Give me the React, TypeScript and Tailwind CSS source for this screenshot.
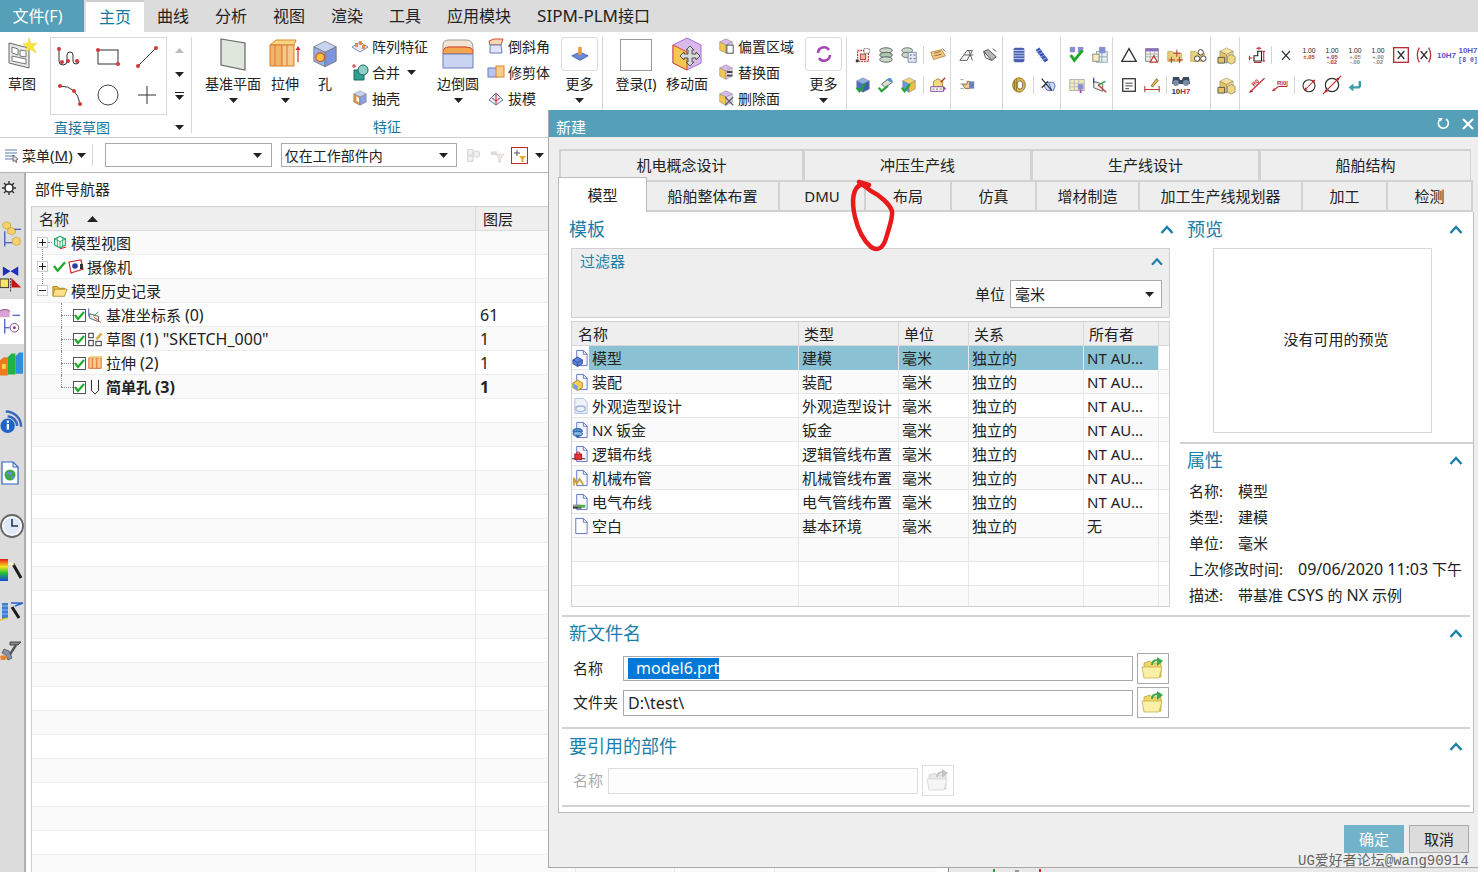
import React from "react";

const font = "font-['Noto_Sans','Noto_Sans_CJK_SC',sans-serif]";

// 下拉小三角
const Caret = ({ className = "" }: { className?: string }) => (
  <svg width="9" height="5" viewBox="0 0 9 5" className={className}>
    <path d="M0 0h9L4.5 5z" fill="#222" />
  </svg>
);

const Chevron = ({ className = "" }: { className?: string }) => (
  <svg width="14" height="9" viewBox="0 0 14 9" className={className}>
    <path d="M1.5 8 7 2l5.5 6" fill="none" stroke="#1a7ea8" strokeWidth="2.4" />
  </svg>
);

const Svg = ({ s = 18, children }: { s?: number; children: React.ReactNode }) => (
  <svg width={s} height={s} viewBox="0 0 20 20">
    {children}
  </svg>
);

const Cube = ({ top, left, right }: { top: string; left: string; right: string }) => (
  <>
    <path d="M10 2l7 3.5-7 3.5-7-3.5z" fill={top} stroke="#777" strokeWidth=".5" />
    <path d="M3 5.5 10 9v9l-7-3.5z" fill={left} stroke="#777" strokeWidth=".5" />
    <path d="M17 5.5 10 9v9l7-3.5z" fill={right} stroke="#777" strokeWidth=".5" />
  </>
);

const Folder = ({ tone = "#f6e27a" }: { tone?: string }) => (
  <path d="M2 6h5l2 2h8v9H2z" fill={tone} stroke="#b08f2a" strokeWidth=".7" />
);

const NumIcon = ({ a, b, red = true }: { a: string; b?: string; red?: boolean }) => (
  <svg width="20" height="20" viewBox="0 0 22 22">
    <text x="11" y="9" textAnchor="middle" fontSize="7.5" fontFamily="Liberation Sans" fill="#222">1.00</text>
    <text x="11" y="15.5" textAnchor="middle" fontSize="6.5" fontWeight="700" fontFamily="Liberation Sans" fill={red ? "#b5303a" : "#888"}>{a}</text>
    {b && <text x="11" y="21" textAnchor="middle" fontSize="6.5" fontWeight="700" fontFamily="Liberation Sans" fill={red ? "#b5303a" : "#888"}>{b}</text>}
  </svg>
);

// 工具栏上的小图标
const small: Record<string, React.ReactNode> = {
  sel: <Svg><rect x="4" y="5" width="12" height="12" fill="none" stroke="#c63a3a" strokeDasharray="2 1" strokeWidth="1.4" /><rect x="7" y="9" width="6" height="6" fill="#e9b7a0" stroke="#c02a2a" /><path d="M11 3h6v5h-6z" fill="#fff" stroke="#333" strokeDasharray="1 1" /><rect x="2" y="15" width="3" height="3" fill="#333" /></Svg>,
  stack: <Svg><ellipse cx="10" cy="5" rx="7" ry="3" fill="#c9d9c4" stroke="#556" /><ellipse cx="10" cy="10" rx="7" ry="3" fill="#a8c8a6" stroke="#556" /><ellipse cx="10" cy="15" rx="7" ry="3" fill="#c9d9c4" stroke="#556" /></Svg>,
  stack2: <Svg><ellipse cx="8" cy="5" rx="6" ry="3" fill="#c9d9c4" stroke="#667" /><ellipse cx="8" cy="10" rx="6" ry="3" fill="#c9d9c4" stroke="#667" /><rect x="9" y="7" width="9" height="11" fill="#e3e8f7" stroke="#7788aa" /><path d="M11 10h2M15 10h2M11 14h2M15 14h2" stroke="#556" /></Svg>,
  tag: <Svg><path d="M2 7l12-3 4 7-13 4z" fill="#f3c988" stroke="#b98a3e" /><path d="M6 8l7-2M6 11l8-2" stroke="#8a6a30" /><path d="M15 3l3 3" stroke="#555" /></Svg>,
  blueCheck: <Svg><Cube top="#8db0ea" left="#4a72c8" right="#3b5fb0" /><path d="M3 13l3 4 6-8" fill="none" stroke="#1fa52b" strokeWidth="2.4" /></Svg>,
  hammerCheck: <Svg><path d="M5 9l8-6 4 4-8 6z" fill="#d8e4c8" stroke="#556" /><path d="M10 4l5-2 3 4-3 1z" fill="#5b8fd8" /><path d="M2 13l3 4 7-6" fill="none" stroke="#1fa52b" strokeWidth="2.4" /></Svg>,
  yellowCheck: <Svg><Cube top="#f2d675" left="#6d95e0" right="#f0bc45" /><path d="M2 13l3 4 6-8" fill="none" stroke="#1fa52b" strokeWidth="2.4" /></Svg>,
  boxPen: <Svg><path d="M5 6l5-3 5 3v6H5z" fill="#f3d98a" stroke="#a8862e" /><rect x="2" y="12" width="14" height="5" fill="#fff" stroke="#7a3fa0" /><path d="M4 14.500h2M8 14.500h2M12 14.500h2" stroke="#555" /><path d="M16 11l3 3-3 3z" fill="#a447b8" /><path d="M13 7l5-5" stroke="#c0392b" strokeWidth="1.6" /></Svg>,
  wire: <Svg><path d="M2 16L10 5h6l-6 11z" fill="#f3f3f3" stroke="#555" /><path d="M7 10h10M12 5l4 11" stroke="#555" /></Svg>,
  wire2: <Svg><path d="M3 6l5-2 9 8-5 4z" fill="#b7b7b7" stroke="#444" /><path d="M3 6l2 7 7 3" fill="none" stroke="#444" /><path d="M13 3l4 3" stroke="#444" /></Svg>,
  hand: <Svg><path d="M3 4h3M3 9h3M3 14h3" stroke="#444" strokeDasharray="1 1" /><path d="M5 9h5V6h3v8H8l-2-3z" fill="#ecc9a0" stroke="#8a6a40" /><rect x="13" y="6" width="5" height="8" fill="#6a7fc0" /></Svg>,
  coil: <Svg><rect x="4" y="2" width="12" height="16" rx="2" fill="#4a5fb0" /><path d="M4 5h12M4 8h12M4 11h12M4 14h12" stroke="#cfd8f5" /></Svg>,
  spring: <Svg><path d="M5 3l10 14" stroke="#3d55b0" strokeWidth="5" /><path d="M3 7l6-3M5 10l6-3M7 13l6-3M9 16l6-3" stroke="#a5b6ee" /></Svg>,
  gold: <Svg><ellipse cx="10" cy="10" rx="7" ry="8" fill="#d9b44a" stroke="#8a7020" /><ellipse cx="11" cy="10" rx="3" ry="4.500" fill="#fff" stroke="#665" /><path d="M5 4v12M7 3v14" stroke="#8a7020" /></Svg>,
  crossed: <Svg><path d="M8 7h8l2 4-2 5H9l-3-4z" fill="#cfd9f3" stroke="#4f68c0" /><path d="M11 8l3 8" stroke="#4f68c0" /><path d="M3 3l11 13M3 13l7-7" stroke="#333" strokeWidth="1.4" /></Svg>,
  checkPurple: <Svg><rect x="2" y="1" width="6" height="6" fill="#8a8ed2" /><rect x="11" y="1" width="6" height="6" fill="#8a8ed2" /><path d="M3 10l4 6 9-11" fill="none" stroke="#1fa52b" strokeWidth="3.2" /></Svg>,
  tablePurple: <Svg><rect x="6" y="6" width="12" height="12" fill="#e8edf6" stroke="#8aa" /><path d="M6 12h12M12 6v12" stroke="#8aa" /><rect x="2" y="9" width="7" height="8" fill="#f6edc5" stroke="#887" /><rect x="9" y="1" width="7" height="7" fill="#8a8ed2" /></Svg>,
  gridYellow: <Svg><rect x="2" y="4" width="16" height="12" fill="#f2eebc" stroke="#aaa" /><path d="M2 8h16M2 12h16M7 4v12M12 4v12" stroke="#bbb" /><rect x="11" y="9" width="6" height="6" fill="#8a8ed2" /><path d="M14 15v4" stroke="#a447b8" strokeWidth="2" /></Svg>,
  csys: <Svg><path d="M3 6l10 3v8L3 13z" fill="#f0f0f0" stroke="#555" /><path d="M3 2v6" stroke="#2b3fc0" strokeWidth="1.4" /><path d="M8 10l8-4" stroke="#1fa52b" strokeWidth="1.4" /><path d="M8 10l9 8" stroke="#c0392b" strokeWidth="1.4" /></Svg>,
  triangle: <Svg><path d="M10 3l8 14H2z" fill="none" stroke="#333" strokeWidth="1.5" /></Svg>,
  tableTri: <Svg><rect x="3" y="3" width="14" height="14" fill="#f4f4f4" stroke="#777" /><rect x="3" y="3" width="14" height="3" fill="#8a6cc0" /><path d="M3 9h14M3 12h14M8 6v11M13 6v11" stroke="#aaa" /><path d="M12 11l4 7H8z" fill="#fff" stroke="#c0392b" strokeWidth="1.3" /></Svg>,
  folderCross: <Svg><Folder tone="#e9d27e" /><path d="M12 4v8M8 8h8M6 12v7M3 15.500h7M15 12v7M12 15.500h7" stroke="#c0282d" strokeWidth="1" /></Svg>,
  folderCircles: <Svg><Folder tone="#e9d27e" /><circle cx="13" cy="7" r="3" fill="#fff" stroke="#333" /><circle cx="9" cy="14" r="3" fill="#fff" stroke="#333" /><circle cx="16" cy="14" r="3" fill="#fff" stroke="#333" /></Svg>,
  note: <Svg><rect x="3" y="3" width="14" height="14" fill="#fff" stroke="#333" strokeWidth="1.4" /><path d="M6 8h8M6 11h8M6 14h4" stroke="#333" /></Svg>,
  brush: <Svg><path d="M2 11v7M18 11v7M2 15h16" stroke="#c0392b" strokeWidth="1.2" /><path d="M9 11l6-8 2 2-6 7z" fill="#e9b94e" stroke="#7a6a30" /></Svg>,
  binoc: <svg width="22" height="22" viewBox="0 0 22 22"><path d="M3 3h6l1 3h2l1-3h6l1 7H2z" fill="#3b4a60" /><circle cx="6" cy="9" r="3" fill="#7c8ba3" /><circle cx="16" cy="9" r="3" fill="#7c8ba3" /><text x="11" y="20" textAnchor="middle" fontSize="8" fontWeight="700" fontFamily="Liberation Sans" fill="#333">10<tspan fill="#b5303a">H7</tspan></text></svg>,
  lock: <Svg s={19}><Cube top="#f6e29a" left="#e8c35c" right="#f2d680" /><path d="M1 12h7v6H1z" fill="#e8c35c" stroke="#555" /><path d="M11 11l4-2 4 2v6l-4 2-4-2z" fill="#f2d680" stroke="#998" /></Svg>,
  stair: <svg width="18" height="18" viewBox="0 0 24 24"><path d="M8 20v-7h5V7h5v13z" fill="none" stroke="#222" strokeWidth="1.5" /><path d="M11 3h7M14.500 1v4M8 22h10M2 13v6M1 16h5M21 7v13M19 7h4M19 20h4" stroke="#c0282d" strokeWidth="1.4" /></svg>,
  x: <Svg s={16}><path d="M5 5l10 11M15 5L5 16" stroke="#333" strokeWidth="1.5" /></Svg>,
  xBox: <svg width="16" height="16" viewBox="0 0 24 24"><rect x="1" y="1" width="22" height="22" fill="#fff" stroke="#b5303a" strokeWidth="2" /><path d="M7 6l10 12M17 6L7 18" stroke="#333" strokeWidth="2" /></svg>,
  xParen: <svg width="16" height="16" viewBox="0 0 24 24"><path d="M5 1Q-1 12 5 23M19 1q6 11 0 22" fill="none" stroke="#b5303a" strokeWidth="2" /><path d="M7 6l10 12M17 6L7 18" stroke="#333" strokeWidth="2" /></svg>,
  h7: <svg width="23" height="22" viewBox="0 0 23 22"><text x="11.500" y="14" textAnchor="middle" fontSize="8" fontWeight="700" fontFamily="Liberation Sans" fill="#5a52c8">10H7</text></svg>,
  h7b: <svg width="20" height="24" viewBox="0 0 20 24" className="-translate-x-[2px]"><text x="10" y="10" textAnchor="middle" fontSize="8" fontWeight="700" fontFamily="Liberation Sans" fill="#5a52c8">10H7</text><text x="10" y="19" textAnchor="middle" fontSize="6.500" fontWeight="700" fontFamily="Liberation Mono" fill="#5a52c8">[8 0]</text></svg>,
  rDiag: <svg width="18" height="18" viewBox="0 0 24 24"><path d="M2 22L22 3" stroke="#c0282d" strokeWidth="1.4" /><path d="M2 22l5-1-3-3z" fill="#c0282d" /><text x="6" y="13" fontSize="8" fontWeight="700" fontFamily="Liberation Sans" fill="#c0282d" transform="rotate(-42 9 11)">R0</text></svg>,
  rFlat: <svg width="18" height="18" viewBox="0 0 24 24"><path d="M2 20l8-6h12" fill="none" stroke="#c0282d" strokeWidth="1.4" /><path d="M2 20l2-4 2 3z" fill="#c0282d" /><text x="8" y="12" fontSize="8" fontWeight="700" fontFamily="Liberation Sans" fill="#c0282d">R|0|</text></svg>,
  dia: <svg width="18" height="18" viewBox="0 0 24 24"><circle cx="12" cy="13" r="8" fill="none" stroke="#333" strokeWidth="1.5" /><path d="M6 19L20 5" stroke="#c0282d" strokeWidth="1.4" /><path d="M20 5l-5 1 4 4zM6 19l1-4 3 3z" fill="#c0282d" /></svg>,
  dia2: <svg width="20" height="20" viewBox="0 0 24 24"><circle cx="12" cy="12" r="8" fill="none" stroke="#333" strokeWidth="1.5" /><path d="M1 23L23 1" stroke="#c0282d" strokeWidth="1.4" /><path d="M3 21l1-4 3 3zM21 3l-4 1 3 3z" fill="#c0282d" /></svg>,
  back: <Svg s={16}><path d="M16 5v6a2 2 0 0 1-2 2H7" fill="none" stroke="#3b9fa8" strokeWidth="3" /><path d="M8 8l-6 5 6 5z" fill="#3b9fa8" /></Svg>,
};

const num = {
  a: <NumIcon a="±.05" />,
  b: <NumIcon a="+.05" b="-.02" />,
  c: <NumIcon a="+.05" b="-.00" red={false} />,
  d: <NumIcon a="+.00" b="-.02" red={false} />,
};

// 小图标分组，每格 23px，分隔 6px
const Cell = ({ children }: { children?: React.ReactNode }) => (
  <div className="w-[23px] h-[30px] flex items-center justify-center shrink-0">{children}</div>
);
const Sep = () => (
  <div className="w-[6px] h-[30px] flex items-center justify-center shrink-0">
    <div className="w-px h-[18px] bg-[#d4d4d4]" />
  </div>
);

const IconGroup = ({ w, rows, pl = "pl-[4px]" }: { w: string; rows: (string | null)[][]; pl?: string }) => (
  <div className={`${w} ${pl} shrink-0 pt-[3px] border-r border-[#d8d8d8] h-[84px]`}>
    {rows.map((r, i) => (
      <div key={i} className="flex">
        {r.map((k, j) => (k === "|" ? <Sep key={j} /> : <Cell key={j}>{k ? small[k] : null}</Cell>))}
      </div>
    ))}
  </div>
);

const LargeBtn = ({ w, label, children, caret = true }: { w: string; label: string; children: React.ReactNode; caret?: boolean }) => (
  <div className={`${w} shrink-0 flex flex-col items-center`}>
    <div className="h-[34px] flex items-center justify-center">{children}</div>
    <div className="mt-[3px] leading-[20px] text-[14px] whitespace-nowrap">{label}</div>
    {caret && <Caret className="mt-[4px]" />}
  </div>
);

const StackItem = ({ icon, label, extra }: { icon: React.ReactNode; label: string; extra?: boolean }) => (
  <div className="h-[26px] flex items-center text-[14px] whitespace-nowrap">
    <div className="w-[18px] flex justify-center mr-[3px]">{icon}</div>
    {label}
    {extra && <Caret className="ml-[7px]" />}
  </div>
);

const GalleryLine = ({ children }: { children: React.ReactNode }) => (
  <div className="flex items-center justify-center">
    <svg width="30" height="30" viewBox="0 0 30 30">{children}</svg>
  </div>
);

const Dot = ({ x, y }: { x: number; y: number }) => <circle cx={x} cy={y} r="2" fill="#d0393b" />;

const MoreBtn = ({ children }: { children: React.ReactNode }) => (
  <div className="w-[37px] shrink-0 flex flex-col items-center">
    <div className="w-[37px] h-[34px] border border-[#dadada] rounded-[3px] flex items-center justify-center">{children}</div>
    <div className="mt-[3px] leading-[20px] text-[14px] whitespace-nowrap">更多</div>
    <Caret className="mt-[4px]" />
  </div>
);

const Ribbon = () => (
  <div className="h-[106px] flex border-b border-[#cfcfcf] bg-white pt-[5px]">
    {/* 直接草图 */}
    <div className="w-[192px] shrink-0 border-r border-[#d8d8d8] h-[96px]">
      <div className="flex h-[78px]">
        <LargeBtn w="w-[44px]" label="草图" caret={false}>
          <svg width="32" height="32" viewBox="0 0 32 32">
            <path d="M3 5l20 5v20L3 25z" fill="#e8e8e8" stroke="#666" />
            <path d="M6 9l6 2v6l-6-2zM14 12l6 1v6l-6-1zM6 18l14 3v5L6 23z" fill="#fff" stroke="#777" />
            <path d="M23 0l2 6 6-1-4 4 3 6-6-4-4 3 1-5-4-3 5-1z" fill="#f5e63c" stroke="#e8c82a" strokeWidth=".5" />
          </svg>
        </LargeBtn>
        <div className="ml-[6px] w-[117px] h-[78px] border border-[#d8d8d8] grid grid-cols-3 grid-rows-2 shrink-0">
          <GalleryLine>
            <path d="M4 7v14a4 4 0 0 0 8 0v-6a3 3 0 0 1 6 0v6a3 3 0 0 0 6 0" fill="none" stroke="#333" transform="translate(0 -2)" />
            <Dot x={4} y={7} /><Dot x={7} y={20} /><Dot x={13} y={19} /><Dot x={22} y={19} />
          </GalleryLine>
          <GalleryLine>
            <rect x="5" y="8" width="20" height="14" fill="none" stroke="#333" />
            <Dot x={5} y={8} /><Dot x={25} y={22} />
          </GalleryLine>
          <GalleryLine>
            <path d="M6 24 24 6" stroke="#333" />
            <Dot x={6} y={24} /><Dot x={24} y={6} />
          </GalleryLine>
          <GalleryLine>
            <path d="M5 6q17 0 20 18" fill="none" stroke="#333" />
            <Dot x={5} y={6} /><Dot x={19} y={11} /><Dot x={25} y={24} />
          </GalleryLine>
          <GalleryLine>
            <circle cx="15" cy="15" r="10" fill="none" stroke="#444" />
          </GalleryLine>
          <GalleryLine>
            <path d="M15 6v18M6 15h18" stroke="#333" />
          </GalleryLine>
        </div>
        <div className="flex-1 flex flex-col items-center pt-[11px] gap-[19px]">
          <Caret className="rotate-180 opacity-30" />
          <Caret />
          <div className="flex flex-col items-center gap-[2px] -mt-[4px]">
            <div className="w-[9px] h-px bg-[#222]" />
            <Caret />
          </div>
        </div>
      </div>
      <div className="flex items-center h-[20px] mt-[2px] pl-[54px] text-[14px] text-[#1478a0]">
        直接草图
        <Caret className="ml-[65px]" />
      </div>
    </div>

    {/* 特征 */}
    <div className="w-[411px] shrink-0 border-r border-[#d8d8d8] h-[96px]">
      <div className="flex h-[78px] pl-[6px]">
        <LargeBtn w="w-[70px]" label="基准平面">
          <svg width="30" height="34" viewBox="0 0 30 34"><path d="M3 2l24 4v27L3 28z" fill="#dfe7dc" stroke="#666" strokeWidth="1.2" /></svg>
        </LargeBtn>
        <LargeBtn w="w-[34px]" label="拉伸">
          <svg width="34" height="32" viewBox="0 0 34 32">
            <path d="M2 7l6-5h20l-2 5z" fill="#f5d583" stroke="#d98a2b" />
            <path d="M2 7h12v21H2z" fill="#f2b36c" stroke="#d97a2b" />
            <path d="M14 7h12v21H14z" fill="#f6c98a" stroke="#d97a2b" />
            <path d="M7 7v21M19 7v21" stroke="#d97a2b" />
            <path d="M30 24V11" stroke="#d0282d" strokeWidth="1.2" />
            <path d="M30 8l-2.500 4h5z" fill="#d0282d" />
          </svg>
        </LargeBtn>
        <LargeBtn w="w-[46px]" label="孔" caret={false}>
          <svg width="32" height="32" viewBox="0 0 20 20">
            <Cube top="#c6d3f1" left="#97aeea" right="#7c93de" />
            <circle cx="7" cy="12" r="2.700" fill="#f6c33f" stroke="#d9482c" strokeWidth=".7" />
          </svg>
        </LargeBtn>
        <div className="w-[88px] shrink-0 pl-[3px] -mt-[4px]">
          <StackItem label="阵列特征" icon={<svg width="18" height="16" viewBox="0 0 18 16"><path d="M1 9l8-5 8 5-8 5z" fill="#e6eaf5" stroke="#8090c0" /><rect x="4" y="5" width="3" height="4" fill="#e88f3e" /><rect x="8" y="3" width="3" height="4" fill="#e88f3e" /><rect x="11" y="7" width="3" height="4" fill="#e88f3e" /></svg>} />
          <StackItem label="合并" extra icon={<svg width="18" height="18" viewBox="0 0 18 18"><path d="M3 7h10v10H3z" fill="#2f9e8f" stroke="#1c6a60" /><circle cx="12" cy="7" r="5" fill="#8fd0c4" stroke="#1c6a60" /><path d="M1 3h4M3 1v4" stroke="#d0282d" /></svg>} />
          <StackItem label="抽壳" icon={<svg width="18" height="18" viewBox="0 0 20 20"><Cube top="#c6d3f1" left="#e88f3e" right="#8ea2de" /><path d="M6 8l3 2v5l-3-2z" fill="#fff" /></svg>} />
        </div>
        <LargeBtn w="w-[44px]" label="边倒圆">
          <svg width="36" height="36" viewBox="0 0 36 36">
            <path d="M3 14V9q0-5 6-5h17q7 0 7 7v3q-2-3-8-3H9q-4 0-6 3z" fill="#f5e3d2" stroke="#999" />
            <path d="M3 14q2-3 6-3h16q6 0 8 3v4H3z" fill="#f3a64c" stroke="#d9482c" />
            <path d="M3 18h30v14H3z" fill="#c8d4f0" stroke="#6a7cb8" />
          </svg>
        </LargeBtn>
        <div className="w-[72px] shrink-0 pl-[7px] -mt-[4px]">
          <StackItem label="倒斜角" icon={<svg width="18" height="18" viewBox="0 0 18 18"><path d="M2 4l5-2h9l-2 6H3z" fill="#f6d7b5" stroke="#d9482c" /><path d="M3 8h11l1 8H3z" fill="#dfe6f7" stroke="#6a7cb8" /></svg>} />
          <StackItem label="修剪体" icon={<svg width="18" height="14" viewBox="0 0 18 14"><rect x="1" y="3" width="9" height="9" fill="#b7c6ef" stroke="#6a7cb8" /><rect x="9" y="1" width="8" height="11" fill="#f6cd8d" stroke="#d9882b" /></svg>} />
          <StackItem label="拔模" icon={<svg width="18" height="16" viewBox="0 0 18 16"><path d="M2 10l7-7 7 7-7 5z" fill="#e5ebf7" stroke="#6a7cb8" /><path d="M9 3v12M5 8l4 3 4-3" fill="none" stroke="#d0282d" /></svg>} />
        </div>
        <div className="ml-[9px]">
          <MoreBtn>
            <svg width="20" height="18" viewBox="0 0 22 20"><path d="M2 12l9-4 9 4-9 5z" fill="#6a8ad6" stroke="#3b5fb0" /><rect x="9" y="2" width="4" height="9" rx="1" fill="#ef9a3e" /></svg>
          </MoreBtn>
        </div>
      </div>
      <div className="h-[20px] mt-[2px] pl-[181px] text-[14px] leading-[20px] text-[#1478a0]">特征</div>
    </div>

    {/* 同步建模 */}
    <div className="w-[244px] shrink-0 border-r border-[#d8d8d8] h-[96px] flex">
      <LargeBtn w="w-[66px]" label="登录(I)" caret={false}>
        <div className="w-[32px] h-[32px] border border-[#999] mt-[1px]" />
      </LargeBtn>
      <LargeBtn w="w-[36px]" label="移动面" caret={false}>
        <svg width="32" height="34" viewBox="0 0 32 34">
          <path d="M16 1l14 7v18l-14 7L2 26V8z" fill="#d9b8ec" stroke="#a36cd0" />
          <path d="M2 8l14 7v18L2 26z" fill="#f2c84f" stroke="#d9482c" />
          <path d="M19 9l4 4h-2v4h4v-2l4 4-4 4v-2h-4v4h2l-4 4-4-4h2v-4h-4v2l-4-4 4-4v2h4v-4h-2z" fill="#d8d8d8" stroke="#555" />
        </svg>
      </LargeBtn>
      <div className="w-[100px] shrink-0 pl-[12px] -mt-[4px]">
        <StackItem label="偏置区域" icon={<svg width="18" height="18" viewBox="0 0 20 20"><Cube top="#d9b8ec" left="#f2c84f" right="#e6d8f2" /><rect x="11" y="9" width="7" height="9" fill="#fff" stroke="#444" /></svg>} />
        <StackItem label="替换面" icon={<svg width="18" height="18" viewBox="0 0 20 20"><Cube top="#d9b8ec" left="#f2c84f" right="#e6d8f2" /><path d="M11 10h6M11 14h6" stroke="#444" strokeWidth="2" /></svg>} />
        <StackItem label="删除面" icon={<svg width="18" height="18" viewBox="0 0 20 20"><Cube top="#d9b8ec" left="#f2c84f" right="#e6d8f2" /><path d="M9 9l9 9M18 9l-9 9" stroke="#666" strokeWidth="1.6" /></svg>} />
      </div>
      <MoreBtn>
        <svg width="18" height="18" viewBox="0 0 18 18"><path d="M3 8a6 6 0 0 1 11-3" fill="none" stroke="#a447b8" strokeWidth="2.6" /><path d="M15 10a6 6 0 0 1-11 3" fill="none" stroke="#a447b8" strokeWidth="2.6" /></svg>
      </MoreBtn>
    </div>

    <IconGroup w="w-[104px]" rows={[["sel", "stack", "stack2", "|", "tag"], ["blueCheck", "hammerCheck", "yellowCheck", "|", "boxPen"]]} />
    <IconGroup w="w-[52px]" rows={[["wire", "wire2"], ["hand"]]} />
    <IconGroup w="w-[58px]" rows={[["coil", "spring"], ["gold", "|", "crossed"]]} />
    <IconGroup w="w-[52px]" rows={[["checkPurple", "tablePurple"], ["gridYellow", "csys"]]} />
    <IconGroup w="w-[98px]" rows={[["triangle", "tableTri", "folderCross", "folderCircles"], ["note", "brush", "|", "binoc"]]} />
    <IconGroup w="w-[29px]" rows={[["lock"], ["lock"]]} />
    <div className="pl-[5px] pt-[3px] shrink-0">
      <div className="flex">
        <Cell>{small.stair}</Cell>
        <Sep />
        <Cell>{small.x}</Cell>
        <Cell>{num.a}</Cell>
        <Cell>{num.b}</Cell>
        <Cell>{num.c}</Cell>
        <Cell>{num.d}</Cell>
        <Cell>{small.xBox}</Cell>
        <Cell>{small.xParen}</Cell>
        <Cell>{small.h7}</Cell>
        <Cell>{small.h7b}</Cell>
      </div>
      <div className="flex">
        <Cell>{small.rDiag}</Cell>
        <Cell>{small.rFlat}</Cell>
        <Sep />
        <Cell>{small.dia}</Cell>
        <Cell>{small.dia2}</Cell>
        <Cell>{small.back}</Cell>
      </div>
    </div>
  </div>
);

const Toolbar = () => (
  <div className="h-[35px] flex items-center border-b border-[#b5b5b5] bg-white text-[14px]">
    <div className="w-[22px] flex justify-center pl-[2px]">
      <svg width="17" height="15" viewBox="0 0 17 15"><path d="M1 2h12M1 5h12M1 8h10M1 11h8" stroke="#5b7fb5" strokeWidth="1.2" /><path d="M9 7l5 4-2 1 1 2-1 .500-1-2-2 1z" fill="#ddd" stroke="#444" strokeWidth=".7" /></svg>
    </div>
    <div>菜单<span className="text-[15px]">(<span className="underline">M</span>)</span></div>
    <Caret className="ml-[4px]" />
    <div className="w-px h-[22px] bg-[#d8d8d8] ml-[6px]" />
    <div className="ml-[12px] w-[167px] h-[24px] border border-[#aaa] flex items-center justify-end pr-[9px]">
      <Caret />
    </div>
    <div className="ml-[9px] w-[176px] h-[24px] border border-[#aaa] flex items-center justify-between pl-[3px] pr-[8px] whitespace-nowrap">
      仅在工作部件内
      <Caret />
    </div>
    <div className="ml-[7px] flex items-center gap-[6px] opacity-40">
      <Svg s={18}><path d="M4 4h6v6H4zM4 11h6v6H4z" fill="#ddd" stroke="#888" /><circle cx="14" cy="9" r="3.500" fill="#ddd" stroke="#888" /></Svg>
      <Svg s={18}><path d="M3 6h7v4H3z" fill="#aaa" /><path d="M9 9h9l-4 5v4h-2v-4z" fill="#ccc" stroke="#999" /></Svg>
    </div>
    <div className="ml-[5px] w-[17px] h-[17px] border border-[#c0282d] flex items-center justify-center">
      <svg width="13" height="13" viewBox="0 0 13 13"><path d="M4 1v6M1 4h6" stroke="#555" /><path d="M6 7h7l-2.500 3v3h-2v-3z" fill="#e8a82b" /></svg>
    </div>
    <Caret className="ml-[7px]" />
  </div>
);

const sideItems: { h: string; active?: boolean; icon: React.ReactNode }[] = [
  { h: "h-[42px]", icon: <svg width="25" height="34" viewBox="0 0 25 34"><path d="M3 4l4-2 4 2v4l-4 2-4-2zM8 10l4-2 4 2v4l-4 2-4-2z" fill="#f3d36a" stroke="#c99a2a" strokeWidth=".7" /><path d="M5 12v16M5 24h8M15 10h7" stroke="#1f3fb0" strokeWidth="1.1" /><path d="M13 20l4-2 4 2v5l-4 2-4-2z" fill="#f3d36a" stroke="#c99a2a" strokeWidth=".7" /></svg> },
  { h: "h-[42px]", icon: <svg width="25" height="28" viewBox="0 0 25 28"><path d="M3 2l8 5 8-5v10l-8-5-8 5z" fill="#1f2fb8" /><rect x="0" y="15" width="9" height="9" fill="#f5e36a" stroke="#333" /><path d="M11 14v14" stroke="#333" strokeDasharray="2 1" /><path d="M12 14l10 10H12z" fill="#c51414" /></svg> },
  { h: "h-[45px]", active: true, icon: <svg width="25" height="30" viewBox="0 0 25 30"><ellipse cx="5" cy="4" rx="5" ry="2" fill="#d9a3d4" stroke="#8a4a80" /><rect x="0" y="4" width="10" height="6" fill="#d9a3d4" /><path d="M13 8h8M5 12v15M5 21h5" stroke="#1f3fb0" strokeWidth="1.1" /><circle cx="15" cy="21" r="4.500" fill="none" stroke="#8a3a80" /><circle cx="15" cy="21" r="1.500" fill="#8a3a80" /></svg> },
  { h: "h-[41px]", icon: <svg width="25" height="26" viewBox="0 0 25 26"><path d="M0 8l4-3h4v19H0z" fill="#f07a1a" /><path d="M8 5l4-4h4v22H8z" fill="#1fb63f" /><path d="M16 4l4-4h4v22h-8z" fill="#2d8fe0" /><path d="M2 12h4v5H2z" fill="#f5dd4a" /></svg> },
  { h: "mt-[15px] h-[41px]", icon: <svg width="25" height="26" viewBox="0 0 25 26"><path d="M6 3a16 16 0 0 1 16 16M8 8a11 11 0 0 1 10 10" fill="none" stroke="#3a66c0" strokeWidth="2.6" /><circle cx="8" cy="18" r="7.500" fill="#1d63c9" /><rect x="7" y="16" width="2.400" height="6" fill="#fff" /><rect x="7" y="12.500" width="2.400" height="2.400" fill="#fff" /></svg> },
  { h: "mt-[11px] h-[41px]", icon: <svg width="20" height="24" viewBox="0 0 20 24"><path d="M2 1h11l5 5v17H2z" fill="#fff" stroke="#2a62c8" strokeWidth="1.2" /><path d="M13 1v5h5" fill="none" stroke="#2a62c8" /><circle cx="10" cy="14" r="5.500" fill="#3fa64a" /><path d="M7 11h5v3H7zM11 15h3v3h-3z" fill="#5a8fd8" /></svg> },
  { h: "mt-[12px] h-[41px]", icon: <svg width="24" height="24" viewBox="0 0 24 24"><circle cx="12" cy="12" r="11" fill="#fff" stroke="#666" strokeWidth="1.8" /><circle cx="12" cy="12" r="8.500" fill="#dfe8f7" /><path d="M12 5v7h6" fill="none" stroke="#23344f" strokeWidth="1.6" /></svg> },
  { h: "mt-[4px] h-[40px]", icon: <svg width="24" height="24" viewBox="0 0 24 24"><defs><linearGradient id="rb" x1="0" y1="0" x2="0" y2="1"><stop offset="0" stopColor="#e8181a" /><stop offset=".35" stopColor="#f5e61a" /><stop offset=".65" stopColor="#1fbf3a" /><stop offset="1" stopColor="#1a3fe8" /></linearGradient></defs><rect x="0" y="1" width="8" height="22" fill="url(#rb)" /><path d="M13 6l8 14" stroke="#1b1b1b" strokeWidth="3" /><path d="M10 3l2 2 2-2-1 3 2 1-3 .500-1 2-.500-2-2-1z" fill="#f8f8c8" /></svg> },
  { h: "h-[40px]", icon: <svg width="24" height="24" viewBox="0 0 24 24"><rect x="2" y="5" width="6" height="16" fill="#3a7fd6" /><path d="M2 8h6M2 12h6M2 16h6" stroke="#8fc0f0" /><path d="M0 22l8-2" stroke="#e8c82a" strokeWidth="1.4" /><path d="M11 5h12l-8 3" fill="none" stroke="#2a62c8" strokeWidth="1.4" /><path d="M12 9l7 11" stroke="#1b1b1b" strokeWidth="3" /></svg> },
  { h: "h-[40px]", icon: <svg width="24" height="24" viewBox="0 0 24 24"><path d="M10 4h11l-3 3H10z" fill="#888" stroke="#444" /><path d="M16 7l-7 11" stroke="#555" strokeWidth="2.4" /><path d="M4 11l5 2 3 7-4 2-2-5-4-2z" fill="#8a90a8" stroke="#444" strokeWidth=".7" /><path d="M0 18q4-2 8 1l-3 3H1z" fill="#e8842b" /></svg> },
];

const NavCheck = () => (
  <div className="w-[13px] h-[13px] border border-[#555] bg-white flex items-center justify-center shrink-0">
    <svg width="11" height="11" viewBox="0 0 11 11"><path d="M1 5l3 4 6-7" fill="none" stroke="#1faa2e" strokeWidth="2.2" /></svg>
  </div>
);

const PlusBox = ({ minus }: { minus?: boolean }) => (
  <div className="w-[11px] h-[11px] border border-[#ccc] bg-white flex items-center justify-center relative shrink-0">
    <div className="w-[7px] h-px bg-[#222]" />
    {!minus && <div className="absolute w-px h-[7px] bg-[#222]" />}
  </div>
);

// 树的虚线：竖线叠在行上，不占位
const TreeLine = ({ x, top = "top-0", bottom = "bottom-0" }: { x: string; top?: string; bottom?: string }) => (
  <div className={`absolute ${x} ${top} ${bottom} border-l border-dotted border-[#888]`} />
);

const SubRow = ({ icon, children, last, bold }: { icon: React.ReactNode; children: React.ReactNode; last?: boolean; bold?: boolean }) => (
  <div className={`flex items-center pl-[29px] ${bold ? "font-bold" : ""}`}>
    <TreeLine x="left-[29px]" bottom={last ? "bottom-[12px]" : "bottom-0"} />
    <div className="w-[12px] border-t border-dotted border-[#888]" />
    <NavCheck />
    <div className="ml-[1px] w-[16px] flex justify-center">{icon}</div>
    <span className="ml-[3px]">{children}</span>
  </div>
);

const navRows: React.ReactNode[] = [
  <div className="flex items-center pl-[5px]">
    <TreeLine x="left-[10px]" top="top-[12px]" />
    <PlusBox />
    <div className="w-[4px] border-t border-dotted border-[#888]" />
    <svg width="16" height="17" viewBox="0 0 18 18"><path d="M9 2l6 3v7l-6 3-6-3V5z" fill="#fff" stroke="#23a567" strokeWidth="1.3" /><path d="M3 5l6 3 6-3M9 8v7M6 3.500 6 13M12 3.500V13" fill="none" stroke="#23a567" /><path d="M9 16l7-2" stroke="#d0282d" strokeWidth="1.2" /></svg>
    <span className="ml-[3px] pt-[1px]">模型视图</span>
  </div>,
  <div className="flex items-center pl-[5px]">
    <TreeLine x="left-[10px]" />
    <PlusBox />
    <svg width="13" height="13" viewBox="0 0 14 13" className="ml-[5px]"><path d="M1 6l4 5 8-9" fill="none" stroke="#1faa2e" strokeWidth="2.6" /></svg>
    <svg width="16" height="16" viewBox="0 0 16 16" className="ml-[2px]"><path d="M1 3l12-2 2 9-12 4z" fill="#fff" stroke="#d0282d" strokeWidth="1.2" /><circle cx="7" cy="7" r="2.800" fill="#2a3f9a" /><path d="M12 5h3v5h-3z" fill="#333" /></svg>
    <span className="ml-[3px] pt-[1px]">摄像机</span>
  </div>,
  <div className="flex items-center pl-[5px]">
    <TreeLine x="left-[10px]" bottom="bottom-[12px]" />
    <PlusBox minus />
    <svg width="16" height="15" viewBox="0 0 18 15" className="ml-[4px]"><path d="M1 3h5l2 2h6v8H1z" fill="#e9b931" stroke="#a97f1a" /><path d="M3 6h14l-3 8H1z" fill="#fbe28a" stroke="#b08f2a" /></svg>
    <span className="ml-[3px] pt-[1px]">模型历史记录</span>
  </div>,
  <SubRow icon={<svg width="16" height="17" viewBox="0 0 18 18"><path d="M2 1v9" stroke="#2b3fc0" /><path d="M3 7l10 3v6L3 12z" fill="#eee" stroke="#555" /><path d="M7 10l6-5" stroke="#1fa52b" /><path d="M8 11l8 6" stroke="#c0392b" /></svg>}>基准坐标系 <span className="text-[16px]">(0)</span></SubRow>,
  <SubRow icon={<svg width="16" height="17" viewBox="0 0 18 18"><rect x="2" y="2" width="5" height="5" fill="#fff" stroke="#222" /><rect x="2" y="10" width="5" height="6" fill="#fff" stroke="#222" /><rect x="10" y="11" width="6" height="5" fill="#fff" stroke="#222" /><path d="M10 8l5-6 2 1-5 6z" fill="#e8b83a" stroke="#a97f1a" strokeWidth=".5" /></svg>}>草图 <span className="text-[16px]">(1) "SKETCH_000"</span></SubRow>,
  <SubRow icon={<svg width="16" height="16" viewBox="0 0 18 18"><path d="M2 3h14v12H2z" fill="#f6c98a" stroke="#d9682b" /><path d="M6 3v12M11 3v12" stroke="#d9682b" /><path d="M2 3l2-2h14l-2 2z" fill="#f5d583" /></svg>}>拉伸 <span className="text-[16px]">(2)</span></SubRow>,
  <SubRow last bold icon={<svg width="16" height="18" viewBox="0 0 18 18"><path d="M5 1v12l4 4 4-4V1" fill="none" stroke="#222" strokeWidth="1.1" /></svg>}>简单孔 <span className="text-[16px]">(3)</span></SubRow>,
];

const navLayers = ["", "", "", "61", "1", "1", "1"];

const Navigator = () => (
  <div className="flex flex-1 min-h-0 relative">
    <div className="w-[26px] shrink-0 bg-[#dcdcdc] border-r-2 border-[#b0b0b0]">
      <div className="h-[30px] flex items-center pl-[2px]">
        <svg width="14" height="14" viewBox="0 0 14 14"><circle cx="7" cy="7" r="4" fill="#fff" stroke="#333" strokeWidth="1.6" /><path d="M7 0v3M7 11v3M0 7h3M11 7h3M2 2l2 2M10 10l2 2M12 2l-2 2M4 10l-2 2" stroke="#333" strokeWidth="1.4" /></svg>
      </div>
      <div className="mt-[12px]">
        {sideItems.map((it, i) => (
          <div key={i} className={`${it.h} flex items-center ${it.active ? "bg-white" : ""}`}>{it.icon}</div>
        ))}
      </div>
    </div>
    <div className="w-[922px] shrink-0 flex flex-col">
      <div className="h-[33px] pl-[9px] flex items-center text-[15px] bg-white">部件导航器</div>
      <div className="ml-[5px] mr-[10px] border-l border-t border-[#cfcfcf] flex-1 overflow-hidden">
        <div className="grid grid-cols-[444px_100px_99px_100px_164px] h-[24px] bg-[#eeeeee] border-b border-[#dcdcdc] leading-[24px]">
          <div className="pl-[7px] border-r border-[#d8d8d8] flex items-center">
            名称
            <svg width="11" height="6" viewBox="0 0 11 6" className="ml-[18px]"><path d="M0 6h11L5.500 0z" fill="#222" /></svg>
          </div>
          <div className="pl-[7px] border-r border-[#d8d8d8]">图层</div>
          <div className="border-r border-[#d8d8d8]" />
          <div className="border-r border-[#d8d8d8]" />
          <div className="border-r border-[#d8d8d8]" />
        </div>
        {Array.from({ length: 27 }).map((_, i) => (
          <div key={i} className={`grid grid-cols-[444px_100px_99px_100px_164px] h-[24px] border-b border-[#ececec] leading-[24px] ${i % 2 ? "bg-white" : "bg-[#fafafa]"}`}>
            <div className="relative border-r border-[#e8e8e8] flex items-center whitespace-nowrap overflow-hidden">{navRows[i]}</div>
            <div className={`pl-[4px] text-[16px] border-r border-[#e8e8e8] ${i === 6 ? "font-bold" : ""}`}>{navLayers[i]}</div>
            <div className="border-r border-[#e8e8e8]" />
            <div className="border-r border-[#e8e8e8]" />
            <div className="border-r border-[#e8e8e8]" />
          </div>
        ))}
      </div>
    </div>
    <div className="flex-1 border-l border-[#888] bg-[#e9e9e9] flex items-end gap-[20px] pl-[44px]">
      <div className="w-[2px] h-[3px] bg-[#1fa52b]" />
      <div className="w-[4px] h-[2px] bg-[#999]" />
      <div className="w-[2px] h-[3px] bg-[#d0282d]" />
    </div>
  </div>
);

const tabsTop = [
  { w: "w-[244px]", t: "机电概念设计" },
  { w: "w-[228px]", t: "冲压生产线" },
  { w: "w-[228px]", t: "生产线设计" },
  { w: "w-[212px]", t: "船舶结构" },
];
const tabsBottom = [
  { w: "w-[133px]", t: "船舶整体布置" },
  { w: "w-[86px]", t: "DMU" },
  { w: "w-[86px]", t: "布局" },
  { w: "w-[85px]", t: "仿真" },
  { w: "w-[103px]", t: "增材制造" },
  { w: "w-[163px]", t: "加工生产线规划器" },
  { w: "w-[85px]", t: "加工" },
  { w: "w-[85px]", t: "检测" },
];

const Doc = ({ children }: { children?: React.ReactNode }) => (
  <svg width="18" height="18" viewBox="0 0 18 18">
    <path d="M5 1h7l4 4v12H5z" fill="#f7f8ff" stroke="#5d73c9" />
    <path d="M12 1v4h4" fill="none" stroke="#5d73c9" />
    {children}
  </svg>
);

const templates = [
  { name: "模型", type: "建模", owner: "NT AU...", icon: <Doc><path d="M1 11l5-3 5 3v4l-5 3-5-3z" fill="#5c84d8" stroke="#2f4f9f" /><path d="M1 11l5 3 5-3M6 14v4" fill="none" stroke="#2f4f9f" /></Doc> },
  { name: "装配", type: "装配", owner: "NT AU...", icon: <Doc><path d="M1 10l5-3 5 3v5l-5 3-5-3z" fill="#f5cf52" stroke="#a98a2a" /><path d="M1 10l5 3v5l-5-3z" fill="#7ea0e0" /></Doc> },
  { name: "外观造型设计", type: "外观造型设计", owner: "NT AU...", icon: <svg width="18" height="18" viewBox="0 0 18 18"><path d="M3 1h9l4 4v12H3z" fill="#eef2fb" stroke="#aebcde" /><ellipse cx="9" cy="12" rx="5" ry="3" fill="none" stroke="#9fb3de" strokeWidth="1.4" /></svg> },
  { name: "NX 钣金", type: "钣金", owner: "NT AU...", icon: <Doc><ellipse cx="6" cy="10" rx="5" ry="2.500" fill="#4f8fd0" stroke="#2a5fa0" /><ellipse cx="6" cy="13" rx="5" ry="2.500" fill="#7fb2e0" stroke="#2a5fa0" /><path d="M3 14l3 3 3-2" fill="#2a5fa0" /></Doc> },
  { name: "逻辑布线", type: "逻辑管线布置", owner: "NT AU...", icon: <Doc><path d="M0 14h14" stroke="#222" /><rect x="3" y="9" width="7" height="6" fill="#e8323a" stroke="#9a1a20" /><path d="M5 9v-2h3v2" fill="none" stroke="#c0282d" /></Doc> },
  { name: "机械布管", type: "机械管线布置", owner: "NT AU...", icon: <Doc><path d="M2 17V9l3 6 3-5 4 6" fill="none" stroke="#c9a02a" strokeWidth="1.8" /></Doc> },
  { name: "电气布线", type: "电气管线布置", owner: "NT AU...", icon: <Doc><rect x="1" y="12" width="9" height="4" fill="#333" /><path d="M6 12h8v3H6z" fill="#4fb04f" /><rect x="1" y="12" width="5" height="2" fill="#999" /></Doc> },
  { name: "空白", type: "基本环境", owner: "无", icon: <svg width="18" height="18" viewBox="0 0 18 18"><path d="M4 1h8l4 4v12H4z" fill="#fff" stroke="#5d73c9" /><path d="M12 1v4h4" fill="none" stroke="#5d73c9" /></svg> },
];

const cols = "grid grid-cols-[227px_100px_70px_115px_75px_1fr]";

const FolderBtn = ({ disabled }: { disabled?: boolean }) => (
  <div className={`w-[32px] h-[31px] border flex items-center justify-center shrink-0 bg-white ${disabled ? "border-[#ddd]" : "border-[#aaa]"}`}>
    <svg width="24" height="24" viewBox="0 0 24 24" className={disabled ? "opacity-50 grayscale" : ""}>
      <path d="M3 6l6-2 2 2h9v14H3z" fill="#efd868" stroke="#b09a3a" strokeWidth=".7" />
      <path d="M1 10h20l-3 11H3z" fill="#fbf0a8" stroke="#c2a63e" strokeWidth=".7" />
      <path d="M11 8q0-5 6-5" fill="none" stroke="#3fa64a" strokeWidth="2" />
      <path d="M16 0l6 4-6 5z" fill="#3fa64a" />
    </svg>
  </div>
);

const SectionTitle = ({ text, className = "" }: { text: string; className?: string }) => (
  <div className={`flex items-center justify-between text-[18px] leading-[24px] text-[#1a7ea8] ${className}`}>
    {text}
    <Chevron />
  </div>
);

const Dialog = () => (
  <div className="absolute left-[548px] top-[110px] w-[930px] h-[758px] bg-[#eeeeee] border-l border-b border-[#aaaaaa] flex flex-col">
    <div className="h-[27px] bg-[#559fb9] text-white flex items-center justify-between pl-[7px] pr-[3px] shrink-0">
      <span className="text-[15px] pt-[7px]">新建</span>
      <div className="flex items-center gap-[11px]">
        <svg width="14" height="14" viewBox="0 0 14 14"><path d="M4 2.500A5 5 0 1 0 10 2" fill="none" stroke="#fff" strokeWidth="1.6" /><path d="M2 1l5 0-2.500 3.500z" fill="#fff" /></svg>
        <svg width="14" height="14" viewBox="0 0 14 14"><path d="M2 2l10 10M12 2 2 12" stroke="#fff" strokeWidth="2" /></svg>
      </div>
    </div>

    {/* 两行标签 */}
    <div className="flex ml-[10px] mt-[12px] h-[31px] shrink-0">
      {tabsTop.map((t) => (
        <div key={t.t} className={`${t.w} border-t-2 border-l-2 border-r border-[#d2d2d2] flex items-center justify-center`}>{t.t}</div>
      ))}
    </div>
    <div className="flex ml-[9px] h-[32px] shrink-0 relative">
      <div className="w-[89px] h-[35px] -mt-[3px] bg-white border border-b-0 border-[#bbbbbb] flex items-center justify-center z-10">模型</div>
      <div className="flex border-b-2 border-[#d2d2d2]">
        {tabsBottom.map((t) => (
          <div key={t.t} className={`${t.w} border-r-2 border-t-2 border-[#d2d2d2] flex items-center justify-center`}>{t.t}</div>
        ))}
      </div>
    </div>

    {/* 主面板 */}
    <div className="ml-[9px] w-[916px] h-[601px] bg-white border-l border-r border-b border-[#bbbbbb] shrink-0">
      <div className="flex h-[403px]">
        <div className="w-[621px] shrink-0 pt-[5px]">
          <SectionTitle text="模板" className="pl-[10px] w-[615px]" />
          <div className="ml-[12px] mt-[7px] w-[599px] h-[70px] bg-[#eeeeee] border border-[#d0d0d0] px-[8px]">
            <div className="flex items-center justify-between text-[#1a7ea8] leading-[24px]">
              过滤器
              <Chevron className="mr-[-3px] scale-90" />
            </div>
            <div className="flex justify-end items-center mt-[7px] mr-[-1px]">
              单位
              <div className="ml-[5px] w-[152px] h-[28px] bg-white border border-[#aaa] flex items-center justify-between pl-[4px] pr-[7px]">
                毫米
                <Caret />
              </div>
            </div>
          </div>
          <div className="ml-[12px] mt-[3px] w-[599px] h-[286px] border border-[#d0d0d0] overflow-hidden">
            <div className={`${cols} h-[24px] bg-[#eeeeee] leading-[24px] border-b border-[#d8d8d8]`}>
              <div className="pl-[6px] border-r border-[#d8d8d8]">名称</div>
              <div className="pl-[5px] border-r border-[#d8d8d8]">类型</div>
              <div className="pl-[5px] border-r border-[#d8d8d8]">单位</div>
              <div className="pl-[5px] border-r border-[#d8d8d8]">关系</div>
              <div className="pl-[5px] border-r border-[#d8d8d8]">所有者</div>
              <div />
            </div>
            {templates.map((r, i) => (
              <div key={r.name} className={`${cols} h-[24px] leading-[24px] border-b border-[#e6e6e6] ${i % 2 === 1 ? "bg-[#fafafa]" : "bg-white"}`}>
                <div className="flex border-r border-[#e8e8e8]">
                  <div className="w-[17px] flex items-center justify-center shrink-0">{r.icon}</div>
                  <div className={`flex-1 pl-[3px] ${i === 0 ? "bg-[#8bc2d3]" : ""}`}>{r.name}</div>
                </div>
                <div className={`pl-[3px] border-r border-[#e8e8e8] ${i === 0 ? "bg-[#8bc2d3]" : ""}`}>{r.type}</div>
                <div className={`pl-[3px] border-r border-[#e8e8e8] ${i === 0 ? "bg-[#8bc2d3]" : ""}`}>毫米</div>
                <div className={`pl-[3px] border-r border-[#e8e8e8] ${i === 0 ? "bg-[#8bc2d3]" : ""}`}>独立的</div>
                <div className={`pl-[3px] border-r border-[#e8e8e8] ${i === 0 ? "bg-[#8bc2d3]" : ""}`}>{r.owner}</div>
                <div />
              </div>
            ))}
            {[0, 1, 2].map((i) => (
              <div key={i} className={`${cols} h-[24px] border-b border-[#e6e6e6] ${i === 1 ? "bg-white" : "bg-[#fafafa]"}`}>
                <div className="border-r border-[#e8e8e8]" />
                <div className="border-r border-[#e8e8e8]" />
                <div className="border-r border-[#e8e8e8]" />
                <div className="border-r border-[#e8e8e8]" />
                <div className="border-r border-[#e8e8e8]" />
                <div />
              </div>
            ))}
          </div>
        </div>

        <div className="flex-1 pt-[5px]">
          <SectionTitle text="预览" className="pl-[7px] pr-[10px]" />
          <div className="ml-[33px] mt-[7px] w-[219px] h-[185px] border border-[#d8d8d8] flex items-center justify-center pl-[27px] pb-[2px]">
            没有可用的预览
          </div>
          <div className="h-[2px] bg-[#d2d2d2] mt-[9px]" />
          <SectionTitle text="属性" className="pl-[7px] pr-[10px] mt-[4px]" />
          <div className="pl-[9px] mt-[6px] leading-[26px]">
            <div className="flex"><span className="w-[49px]">名称:</span>模型</div>
            <div className="flex"><span className="w-[49px]">类型:</span>建模</div>
            <div className="flex"><span className="w-[49px]">单位:</span>毫米</div>
            <div className="flex whitespace-nowrap"><span className="w-[109px]">上次修改时间:</span><span className="text-[16px]">09/06/2020 11:03</span>&nbsp;下午</div>
            <div className="flex whitespace-nowrap"><span className="w-[49px]">描述:</span>带基准&nbsp;<span className="text-[16px]">CSYS</span>&nbsp;的&nbsp;<span className="text-[16px]">NX</span>&nbsp;示例</div>
          </div>
        </div>
      </div>

      {/* 新文件名 */}
      <div className="ml-[3px] mr-[3px] border-t-2 border-b-2 border-[#d2d2d2] h-[114px] pl-[7px] pr-[7px] pt-[4px]">
        <SectionTitle text="新文件名" />
        <div className="flex items-center ml-[4px] mt-[8px]">
          <span className="w-[50px] shrink-0">名称</span>
          <div className="w-[510px] h-[25px] border border-[#aaa] flex items-center pl-[4px]">
            <span className="bg-[#0078d7] text-white text-[16px] leading-[21px] pl-[8px]">model6.prt</span>
          </div>
          <div className="ml-[4px]"><FolderBtn /></div>
        </div>
        <div className="flex items-center ml-[4px] mt-[3px]">
          <span className="w-[50px] shrink-0">文件夹</span>
          <div className="w-[510px] h-[26px] border border-[#aaa] flex items-center pl-[4px] text-[16px]">D:\test\</div>
          <div className="ml-[4px]"><FolderBtn /></div>
        </div>
      </div>
      {/* 要引用的部件 */}
      <div className="ml-[3px] mr-[3px] border-b-2 border-[#d2d2d2] h-[78px] pl-[7px] pr-[7px] pt-[5px]">
        <SectionTitle text="要引用的部件" />
        <div className="flex items-center ml-[4px] mt-[7px]">
          <span className="w-[35px] shrink-0 text-[#aaaaaa]">名称</span>
          <div className="w-[310px] h-[26px] border border-[#dddddd] bg-[#fdfdfd]" />
          <div className="ml-[4px]"><FolderBtn disabled /></div>
        </div>
      </div>
    </div>

    {/* 底部按钮 */}
    <div className="flex justify-end gap-[5px] pr-[9px] pt-[12px]">
      <div className="w-[60px] h-[28px] bg-[#73b3c9] text-white flex items-center justify-center">确定</div>
      <div className="w-[60px] h-[28px] bg-[#dcdcdc] border border-[#aaa] flex items-center justify-center">取消</div>
    </div>
  </div>
);

export default function App() {
  return (
    <div className={`relative w-[1478px] h-[872px] overflow-hidden bg-white text-[15px] text-[#222] flex flex-col ${font}`}>
      <div className="h-[32px] bg-[#dcdcdc] flex text-[16px] shrink-0">
        <div className="w-[84px] bg-[#559fb9] text-white flex items-center justify-center pr-[9px]">文件(F)</div>
        <div className="ml-[2px] px-[13px] bg-white border-t-2 border-[#cfcfcf] text-[#1478a0] flex items-center">主页</div>
        {["曲线", "分析", "视图", "渲染", "工具", "应用模块"].map((t) => (
          <div key={t} className="px-[13px] flex items-center">{t}</div>
        ))}
        <div className="px-[13px] flex items-center"><span className="text-[17px]">SIPM-PLM</span>接口</div>
      </div>
      <Ribbon />
      <Toolbar />
      <Navigator />
      <Dialog />
      {/* 叠在最上面的批注和水印 */}
      <svg width="60" height="80" viewBox="0 0 60 80" className="absolute left-[845px] top-[175px]">
        <path d="M17 9C8 12 6 25 10 42 13 55 18 65 26 72 34 77 39 72 42 60 45 50 48 42 47 36 44 28 34 20 26 16 22 13 18 10 14 7M14 7l10 3" fill="none" stroke="#e81a1a" strokeWidth="4.500" strokeLinecap="round" strokeLinejoin="round" />
      </svg>
      <div className="absolute left-[1298px] top-[851px] whitespace-nowrap text-[14px] text-[#666] font-['Liberation_Mono','Noto_Sans_CJK_SC',monospace]">
        UG爱好者论坛@wang90914
      </div>
    </div>
  );
}
